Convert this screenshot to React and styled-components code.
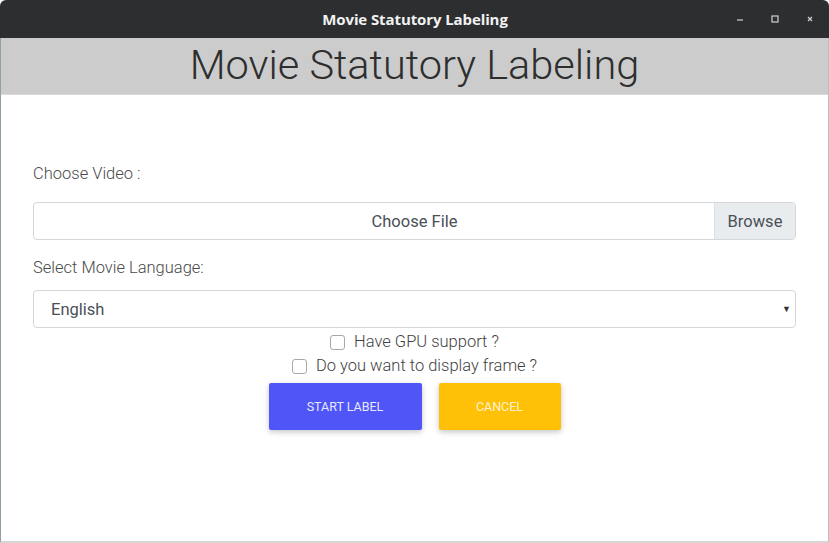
import React from "react";
import styled, { createGlobalStyle } from "styled-components";

const Global = createGlobalStyle`
  html, body { margin: 0; padding: 0; background: #ffffff; }
  body { font-family: Roboto, "Liberation Sans", sans-serif; }
  * { box-sizing: border-box; }
`;

const Window = styled.div`
  width: 829px;
  height: 543px;
  display: flex;
  flex-direction: column;
  background: #ffffff;
  overflow: hidden;
`;

const TitleBar = styled.div`
  height: 38px;
  flex: none;
  background: #2c2e30;
  border-radius: 6px 6px 0 0;
  display: grid;
  grid-template-columns: 1fr auto 1fr;
  align-items: center;
  padding: 0 14px;
`;

const WindowTitle = styled.div`
  grid-column: 2;
  color: #f2f2f2;
  font-family: "Open Sans", "DejaVu Sans", sans-serif;
  font-weight: 700;
  font-size: 15px;
  letter-spacing: -0.1px;
  padding-left: 1px;
`;

const Controls = styled.div`
  grid-column: 3;
  justify-self: end;
  display: flex;
  align-items: center;
  gap: 25px;
`;

const ControlIcon = styled.svg`
  width: 10px;
  height: 10px;
  display: block;
`;

const Body = styled.div`
  flex: 1;
  display: flex;
  flex-direction: column;
  border-left: 1.5px solid #93a1a1;
  border-right: 1.5px solid #b8c0c0;
  border-bottom: 2px solid #d6d6d6;
`;

const Header = styled.header`
  height: 57px;
  flex: none;
  background: #cccccc;
  display: flex;
  align-items: center;
  justify-content: center;
  border-bottom: 1px solid #d9d9d9;
`;

const Heading = styled.h1`
  margin: 0;
  font-family: Roboto, sans-serif;
  font-weight: 300;
  font-size: 41.5px;
  color: #2e2e2e;
  line-height: 1;
  padding-bottom: 2px;
`;

const Form = styled.main`
  padding: 69px 32px 0 32px;
  display: flex;
  flex-direction: column;
`;

const Label = styled.label`
  font-family: Roboto, sans-serif;
  font-weight: 300;
  font-size: 16.5px;
  color: #4a4a4a;
  line-height: 20px;
  margin-bottom: ${(p) => p.$mb || 0}px;
  margin-top: ${(p) => p.$mt || 0}px;
`;

const FileGroup = styled.div`
  display: flex;
  height: 38px;
  border: 1px solid #d3d7dc;
  border-radius: 4px;
  overflow: hidden;
  background: #ffffff;
`;

const FileText = styled.div`
  flex: 1;
  display: flex;
  align-items: center;
  justify-content: center;
  padding-left: 81px;
  font-family: Roboto, sans-serif;
  font-size: 16.5px;
  color: #495057;
`;

const Browse = styled.div`
  width: 81px;
  flex: none;
  display: flex;
  align-items: center;
  justify-content: center;
  background: #e9ecef;
  border-left: 1px solid #dde1e5;
  font-family: Roboto, sans-serif;
  font-size: 16.5px;
  color: #495057;
`;

const Select = styled.div`
  height: 38px;
  border: 1px solid #d3d7dc;
  border-radius: 4px;
  display: flex;
  align-items: center;
  justify-content: space-between;
  padding: 0 4px 0 17px;
  font-family: Roboto, sans-serif;
  font-size: 16.5px;
  color: #495057;
`;

const Caret = styled.span`
  font-size: 9px;
  color: #333;
`;

const Checks = styled.div`
  display: flex;
  flex-direction: column;
  align-items: center;
  gap: 4px;
  margin-top: 4px;
`;

const CheckRow = styled.label`
  display: flex;
  align-items: center;
  gap: 9px;
  font-family: Roboto, sans-serif;
  font-weight: 300;
  font-size: 16.5px;
  color: #3f3f3f;
  line-height: 20px;
`;

const Box = styled.span`
  width: 15px;
  height: 15px;
  border: 1px solid #a9a9a9;
  border-radius: 3px;
  background: #fff;
  display: inline-block;
`;

const Buttons = styled.div`
  display: flex;
  justify-content: center;
  gap: 17px;
  margin-top: 7px;
`;

const Button = styled.button`
  width: ${(p) => p.$w}px;
  height: 47px;
  border: none;
  border-radius: 2px;
  background: ${(p) => p.$bg};
  color: ${(p) => p.$fg};
  font-family: Roboto, sans-serif;
  font-size: 12.5px;
  font-weight: 400;
  text-transform: uppercase;
  box-shadow: 0 2px 5px rgba(0, 0, 0, 0.16), 0 2px 10px rgba(0, 0, 0, 0.08);
`;

export default function App() {
  return (
    <>
      <Global />
      <Window>
        <TitleBar>
          <WindowTitle>Movie Statutory Labeling</WindowTitle>
          <Controls>
            <ControlIcon viewBox="0 0 10 10">
              <line x1="2" y1="6" x2="8" y2="6" stroke="#d0d0d0" strokeWidth="1.2" />
            </ControlIcon>
            <ControlIcon viewBox="0 0 10 10">
              <rect x="2" y="2" width="6" height="6" fill="none" stroke="#d0d0d0" strokeWidth="1.2" />
            </ControlIcon>
            <ControlIcon viewBox="0 0 10 10">
              <path d="M3 3 L7 7 M7 3 L3 7" stroke="#d0d0d0" strokeWidth="1.2" />
            </ControlIcon>
          </Controls>
        </TitleBar>
        <Body>
          <Header>
            <Heading>Movie Statutory Labeling</Heading>
          </Header>
          <Form>
            <Label $mb={18}>Choose Video :</Label>
            <FileGroup>
              <FileText>Choose File</FileText>
              <Browse>Browse</Browse>
            </FileGroup>
            <Label $mt={18} $mb={12}>Select Movie Language:</Label>
            <Select>
              <span>English</span>
              <Caret>▼</Caret>
            </Select>
            <Checks>
              <CheckRow>
                <Box />
                Have GPU support ?
              </CheckRow>
              <CheckRow>
                <Box />
                Do you want to display frame ?
              </CheckRow>
            </Checks>
            <Buttons>
              <Button $w={153} $bg="#4f55f7" $fg="#e8eaff">Start Label</Button>
              <Button $w={122} $bg="#ffc107" $fg="#fff3cf">Cancel</Button>
            </Buttons>
          </Form>
        </Body>
      </Window>
    </>
  );
}
